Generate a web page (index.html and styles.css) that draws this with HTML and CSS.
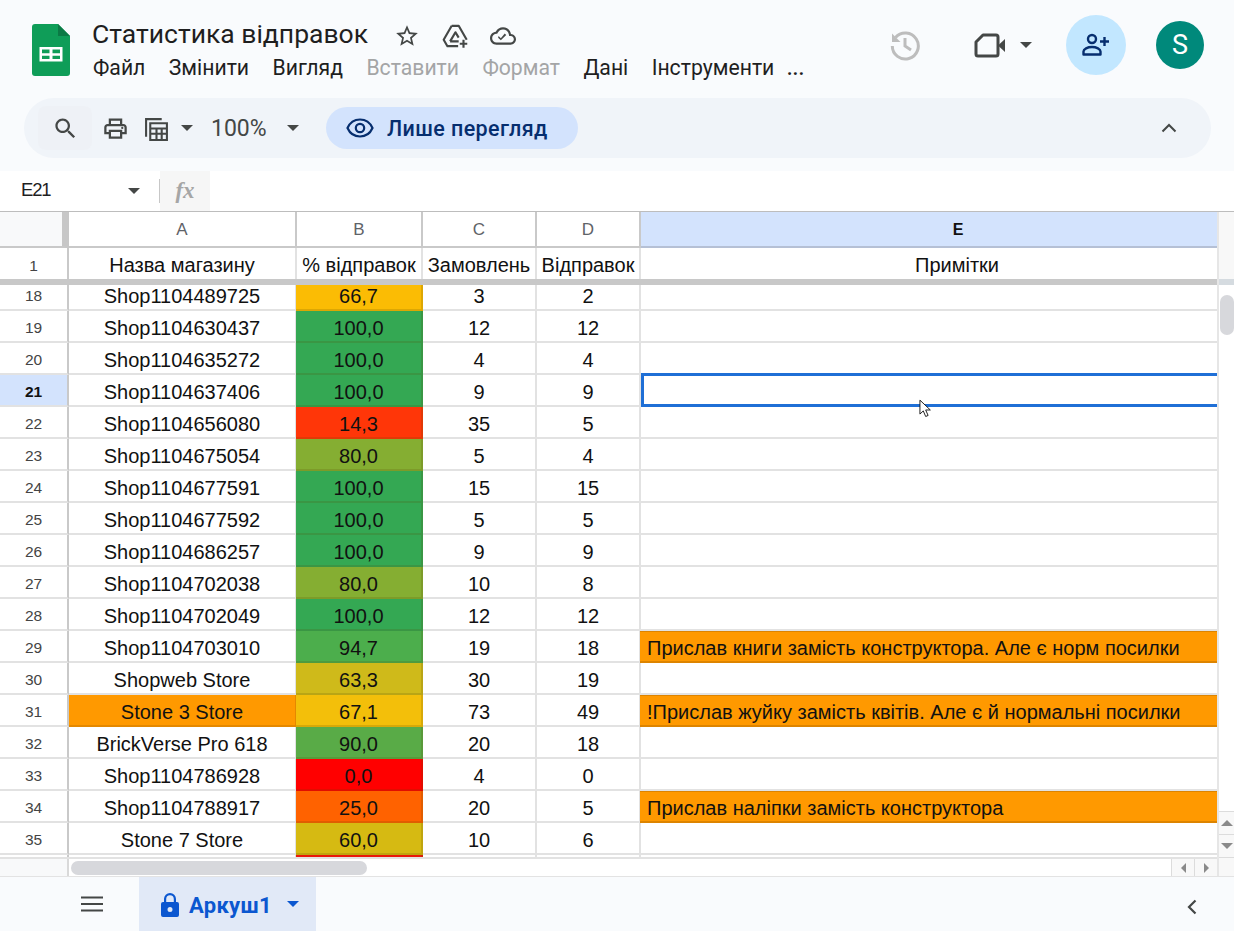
FILE: index.html
```html
<!DOCTYPE html>
<html lang="uk">
<head>
<meta charset="utf-8">
<title>Статистика відправок</title>
<link rel="stylesheet" href="styles.css">
</head>
<body>
<div class="app">
  <header class="top">
    <svg class="logo" viewBox="0 0 38 52"><path d="M3 0h23l12 12v37a3 3 0 0 1-3 3H3a3 3 0 0 1-3-3V3a3 3 0 0 1 3-3z" fill="#0f9d58"/><path d="M26 0l12 12H26z" fill="#0b7a45"/><path d="M7.500 23h23v14.500h-23zm2.500 2.500v3.700h7.500v-3.700zm10.500 0v3.700H28v-3.700zM10 31.800v3.200h7.500v-3.200zm10.500 0v3.200H28v-3.200z" fill="#fff" fill-rule="evenodd"/></svg>
    <div class="titles">
      <div class="title-row">
        <span class="doc-title">Статистика відправок</span>
        <svg class="ti ti-star" viewBox="0 0 24 24"><path d="M22 9.240l-7.190-.62L12 2 9.190 8.630 2 9.240l5.460 4.730L5.820 21 12 17.270 18.180 21l-1.630-7.030L22 9.240zM12 15.400l-3.760 2.270 1-4.280-3.320-2.880 4.380-.38L12 6.100l1.710 4.040 4.380.38-3.320 2.880 1 4.280L12 15.400z"/></svg>
        <svg class="ti ti-drive" viewBox="0 0 28 24"><path d="M10 2.500h6.500L24 15.500M10 2.500L2.500 15.500 6 21.500h10M8.500 17h8M8.500 17l5-8.500 3 5" fill="none" stroke="#444746" stroke-width="2" stroke-linejoin="round"/><path d="M21 15.500v7.500M17.500 19.250h7" stroke="#444746" stroke-width="2" fill="none"/></svg>
        <svg class="ti ti-cloud" viewBox="0 0 24 24"><path d="M19.350 10.040C18.670 6.590 15.640 4 12 4 9.110 4 6.600 5.640 5.350 8.040 2.340 8.360 0 10.910 0 14c0 3.310 2.690 6 6 6h13c2.760 0 5-2.240 5-5 0-2.640-2.050-4.780-4.650-4.960zM19 18H6c-2.210 0-4-1.790-4-4 0-2.050 1.530-3.760 3.560-3.970l1.070-.11.5-.95C8.080 7.140 9.940 6 12 6c2.620 0 4.880 1.860 5.390 4.430l.3 1.500 1.530.11c1.560.1 2.780 1.410 2.780 2.960 0 1.650-1.350 3-3 3zm-9-3.820l-2.090-2.090L7.500 13.500 10 16l5.010-5.010-1.410-1.410z"/></svg>
      </div>
      <nav class="menu">
        <span>Файл</span><span>Змінити</span><span>Вигляд</span><span class="off">Вставити</span><span class="off">Формат</span><span>Дані</span><span>Інструменти</span><span class="more">...</span>
      </nav>
    </div>
    <div class="actions">
      <svg class="history" viewBox="0 0 32 32"><path d="M6.500 8.500A13 13 0 1 1 3.300 17" fill="none" stroke="#bdbdbd" stroke-width="3"/><path d="M3 4.500l0 8.500h8.500z" fill="#bdbdbd"/><path d="M16 9v8l6 4" fill="none" stroke="#bdbdbd" stroke-width="3"/></svg>
      <svg class="video" viewBox="0 0 31 25"><path d="M9 2h13a2 2 0 0 1 2 2v17a2 2 0 0 1-2 2H4a2 2 0 0 1-2-2V9z" fill="none" stroke="#444746" stroke-width="3" stroke-linejoin="round"/><path d="M24 12.500l7-6.500v13z" fill="#444746"/></svg>
      <span class="caret caret-video"></span>
      <span class="share"><svg viewBox="0 0 28 24"><circle cx="10" cy="6" r="4" fill="none" stroke="#062e6f" stroke-width="2.400"/><path d="M1.500 21.500v-3c0-2.500 4-4.500 8.500-4.500s8.500 2 8.500 4.500v3z" fill="none" stroke="#062e6f" stroke-width="2.400" stroke-linejoin="round"/><path d="M22.500 4v9M18 8.500h9" stroke="#062e6f" stroke-width="2.400"/></svg></span>
      <span class="avatar">S</span>
    </div>
  </header>

  <div class="toolbar">
    <span class="search-wrap"><svg class="tool" viewBox="0 0 24 24"><path d="M15.500 14h-.79l-.28-.27C15.410 12.590 16 11.110 16 9.500 16 5.910 13.090 3 9.500 3S3 5.910 3 9.500 5.910 16 9.500 16c1.610 0 3.090-.59 4.230-1.570l.27.28v.79l5 4.990L20.490 19l-4.990-5zm-6 0C7.010 14 5 11.990 5 9.500S7.010 5 9.500 5 14 7.010 14 9.500 11.990 14 9.500 14z"/></svg></span>
    <svg class="tool print" viewBox="0 0 24 24"><path d="M19 8h-1V3H6v5H5c-1.660 0-3 1.340-3 3v6h4v4h12v-4h4v-6c0-1.660-1.340-3-3-3zM8 5h8v3H8V5zm8 12v2H8v-4h8v2zm2-2v-2H6v2H4v-4c0-.55.45-1 1-1h14c.55 0 1 .45 1 1v4h-2z"/><circle cx="18" cy="11.500" r="1"/></svg>
    <svg class="tool calc" viewBox="0 0 24 24"><path d="M1 2h16v2H3v16H1z"/><path d="M5 6h18v18H5zm2 2v3h14V8zm0 5v3h4v-3zm6 0v3h3v-3zm5 0v3h3v-3zm-11 5v4h4v-4zm6 0v4h3v-4zm5 0v4h3v-4z" fill-rule="evenodd"/></svg>
    <span class="caret caret-calc"></span>
    <span class="zoom">100%</span>
    <span class="caret caret-zoom"></span>
    <span class="mode">
      <svg viewBox="0 0 28 20"><path d="M14 1.500C8 1.500 3.500 5.500 1.500 10c2 4.500 6.500 8.500 12.500 8.500S24.500 14.500 26.500 10C24.500 5.500 20 1.500 14 1.500z" fill="none" stroke="#062e6f" stroke-width="2.200"/><circle cx="14" cy="10" r="4.200" fill="none" stroke="#062e6f" stroke-width="2.200"/></svg>
      Лише перегляд
    </span>
    <svg class="collapse" viewBox="0 0 16 10"><path d="M1.500 8.500L8 2l6.500 6.500" fill="none" stroke="#444746" stroke-width="2"/></svg>
  </div>

  <div class="formula">
    <span class="namebox">E21</span>
    <span class="caret caret-name"></span>
    <span class="sep"></span>
    <span class="fx">fx</span>
  </div>

  <main class="sheet">
    <div class="grid">
      <div class="frozen">
        <div class="row row-letters">
          <div class="c corner"></div>
          <div class="c">A</div><div class="c">B</div><div class="c">C</div><div class="c">D</div><div class="c active-col">E</div>
        </div>
        <div class="row row-head">
          <div class="c num">1</div>
          <div class="c">Назва магазину</div><div class="c">% відправок</div><div class="c">Замовлень</div><div class="c">Відправок</div><div class="c">Примітки</div>
        </div>
      </div>
      <div class="body">
        <div class="row first"><div class="c num">18</div><div class="c">Shop1104489725</div><div class="c heat" style="background-color:#fbbc04">66,7</div><div class="c">3</div><div class="c">2</div><div class="c note"></div></div>
        <div class="row"><div class="c num">19</div><div class="c">Shop1104630437</div><div class="c heat" style="background-color:#34a853">100,0</div><div class="c">12</div><div class="c">12</div><div class="c note"></div></div>
        <div class="row"><div class="c num">20</div><div class="c">Shop1104635272</div><div class="c heat" style="background-color:#34a853">100,0</div><div class="c">4</div><div class="c">4</div><div class="c note"></div></div>
        <div class="row"><div class="c num active-row">21</div><div class="c">Shop1104637406</div><div class="c heat" style="background-color:#34a853">100,0</div><div class="c">9</div><div class="c">9</div><div class="c note selected"></div></div>
        <div class="row"><div class="c num">22</div><div class="c">Shop1104656080</div><div class="c heat" style="background-color:#ff3608">14,3</div><div class="c">35</div><div class="c">5</div><div class="c note"></div></div>
        <div class="row"><div class="c num">23</div><div class="c">Shop1104675054</div><div class="c heat" style="background-color:#85ae32">80,0</div><div class="c">5</div><div class="c">4</div><div class="c note"></div></div>
        <div class="row"><div class="c num">24</div><div class="c">Shop1104677591</div><div class="c heat" style="background-color:#34a853">100,0</div><div class="c">15</div><div class="c">15</div><div class="c note"></div></div>
        <div class="row"><div class="c num">25</div><div class="c">Shop1104677592</div><div class="c heat" style="background-color:#34a853">100,0</div><div class="c">5</div><div class="c">5</div><div class="c note"></div></div>
        <div class="row"><div class="c num">26</div><div class="c">Shop1104686257</div><div class="c heat" style="background-color:#34a853">100,0</div><div class="c">9</div><div class="c">9</div><div class="c note"></div></div>
        <div class="row"><div class="c num">27</div><div class="c">Shop1104702038</div><div class="c heat" style="background-color:#85ae32">80,0</div><div class="c">10</div><div class="c">8</div><div class="c note"></div></div>
        <div class="row"><div class="c num">28</div><div class="c">Shop1104702049</div><div class="c heat" style="background-color:#34a853">100,0</div><div class="c">12</div><div class="c">12</div><div class="c note"></div></div>
        <div class="row"><div class="c num">29</div><div class="c">Shop1104703010</div><div class="c heat" style="background-color:#4cae4c">94,7</div><div class="c">19</div><div class="c">18</div><div class="c note flag">Прислав книги замість конструктора. Але є норм посилки</div></div>
        <div class="row"><div class="c num">30</div><div class="c">Shopweb Store</div><div class="c heat" style="background-color:#cfba1a">63,3</div><div class="c">30</div><div class="c">19</div><div class="c note"></div></div>
        <div class="row"><div class="c num">31</div><div class="c flag-name">Stone 3 Store</div><div class="c heat" style="background-color:#f3bf0a">67,1</div><div class="c">73</div><div class="c">49</div><div class="c note flag">!Прислав жуйку замість квітів. Але є й нормальні посилки</div></div>
        <div class="row"><div class="c num">32</div><div class="c">BrickVerse Pro 618</div><div class="c heat" style="background-color:#59ab47">90,0</div><div class="c">20</div><div class="c">18</div><div class="c note"></div></div>
        <div class="row"><div class="c num">33</div><div class="c">Shop1104786928</div><div class="c heat" style="background-color:#ff0000">0,0</div><div class="c">4</div><div class="c">0</div><div class="c note"></div></div>
        <div class="row"><div class="c num">34</div><div class="c">Shop1104788917</div><div class="c heat" style="background-color:#ff6200">25,0</div><div class="c">20</div><div class="c">5</div><div class="c note flag">Прислав наліпки замість конструктора</div></div>
        <div class="row"><div class="c num">35</div><div class="c">Stone 7 Store</div><div class="c heat" style="background-color:#d6ba12">60,0</div><div class="c">10</div><div class="c">6</div><div class="c note"></div></div>
        <div class="row"><div class="c num"></div><div class="c"></div><div class="c heat" style="background-color:#ea1a0a"></div><div class="c"></div><div class="c"></div><div class="c note"></div></div>
      </div>
      <div class="hscroll">
        <div class="hs-corner"></div>
        <div class="hs-track"><span class="hs-thumb"></span></div>
        <span class="arrow-btn"><i class="tri tri-left"></i></span>
        <span class="arrow-btn"><i class="tri tri-right"></i></span>
      </div>
      <svg class="cursor" viewBox="0 0 14 20"><path d="M1 1v15l3.600-3.400 2.600 6 2.600-1.100-2.600-5.900h5z" fill="#fff" stroke="#111" stroke-width="1"/></svg>
    </div>
    <aside class="vscroll">
      <div class="vs-head"></div>
      <div class="vs-track"><span class="vs-thumb"></span></div>
      <span class="vs-btn"><i class="tri tri-up"></i></span>
      <span class="vs-btn"><i class="tri tri-down"></i></span>
      <div class="vs-end"></div>
    </aside>
  </main>

  <footer class="tabs">
    <svg class="burger" viewBox="0 0 22 16"><path d="M0 1.500h22M0 8h22M0 14.500h22" stroke="#444746" stroke-width="2.200"/></svg>
    <div class="tab">
      <svg class="lock" viewBox="0 0 18 25"><path d="M9 1a6 6 0 0 0-6 6v3H2a2 2 0 0 0-2 2v11a2 2 0 0 0 2 2h14a2 2 0 0 0 2-2V12a2 2 0 0 0-2-2h-1V7a6 6 0 0 0-6-6zm0 2.200A3.800 3.800 0 0 1 12.800 7v3H5.200V7A3.800 3.800 0 0 1 9 3.200zM9 15a2.500 2.500 0 1 1 0 5 2.500 2.500 0 0 1 0-5z" fill="#0b57d0" fill-rule="evenodd"/></svg>
      <span class="tab-name">Аркуш1</span>
      <span class="caret caret-tab"></span>
    </div>
    <svg class="expand" viewBox="0 0 10 16"><path d="M8.500 1.500L2 8l6.500 6.500" fill="none" stroke="#444746" stroke-width="2.200"/></svg>
  </footer>
</div>
</body>
</html>
```
FILE: styles.css
```css
*, *::before, *::after { box-sizing: border-box; }
html, body { margin: 0; padding: 0; height: 100%; overflow: hidden; }
body { font-family: "Liberation Sans", Arial, sans-serif; color: #1f1f1f; background: #f9fbfd; }
.app { width: 1234px; height: 931px; display: flex; flex-direction: column; }

/* Top */
.top { height: 98px; display: flex; align-items: flex-start; padding-left: 32px; flex: none; }
.logo { width: 38px; height: 52px; margin-top: 24px; flex: none; }
.titles { margin-left: 22px; width: 767px; font-family: Roboto, sans-serif; }
.title-row { height: 44px; padding-top: 24px; display: flex; align-items: center; }
.doc-title { font-size: 26.500px; line-height: 36px; color: #1f1f1f; width: 276px; white-space: nowrap; }
.ti { fill: #444746; flex: none; margin-top: 4px; }
.ti-star { width: 26px; height: 26px; margin-left: 26px; }
.ti-drive { width: 30px; height: 26px; margin-left: 21px; }
.ti-cloud { width: 28px; height: 26px; margin-left: 18px; }
.menu { display: flex; gap: 23.400px; font-size: 21.200px; line-height: 28px; margin-top: 10px; margin-left: 1px; color: #1f1f1f; }
.menu span { white-space: nowrap; }
.menu .off { color: #a4a5a6; }
.menu .more { margin-left: -11px; font-weight: 500; }
.actions { margin-left: 15px; display: flex; align-items: center; height: 60px; margin-top: 15px; }
.history { width: 32px; height: 32px; margin-left: 15px; }
.video { width: 31px; height: 25px; margin-left: 53px; }
.caret { display: inline-block; width: 0; height: 0; border-left: 6.500px solid transparent; border-right: 6.500px solid transparent; border-top: 6.500px solid #444746; flex: none; }
.caret-video { margin-left: 15px; }
.share { width: 60px; height: 60px; border-radius: 50%; background: #c2e7ff; margin-left: 34px; display: flex; align-items: center; justify-content: center; }
.share svg { width: 28px; height: 24px; }
.avatar { width: 48px; height: 48px; border-radius: 50%; background: #00897b; color: #fff; margin-left: 30px; display: flex; align-items: center; justify-content: center; font: 27px Roboto, sans-serif; }

/* Toolbar */
.toolbar { height: 60px; margin: 0 23px 13px 24px; border-radius: 30px; background: #f0f4f9; display: flex; align-items: center; flex: none; }
.search-wrap { margin-left: 14px; width: 54px; height: 44px; background: #eef1f6; display: flex; align-items: center; justify-content: center; border-radius: 8px; }
.tool { width: 27px; height: 27px; fill: #444746; flex: none; }
.print { margin-left: 10px; }
.calc { width: 25px; height: 25px; margin-left: 15px; }
.caret-calc { margin-left: 12px; }
.zoom { margin-left: 18px; font: 23px Roboto, sans-serif; color: #444746; width: 56px; white-space: nowrap; }
.caret-zoom { margin-left: 20px; }
.mode { margin-left: 27px; height: 42px; width: 252px; border-radius: 21px; background: #d3e3fd; display: flex; align-items: center; font: 500 21.500px Roboto, sans-serif; color: #062e6f; padding-left: 20px; gap: 13px; letter-spacing: .4px; white-space: nowrap; }
.mode svg { width: 28px; height: 20px; flex: none; }
.collapse { width: 16px; height: 10px; margin-left: auto; margin-right: 34px; }

/* Formula */
.formula { height: 41px; background: #fff; display: flex; align-items: center; flex: none; border-bottom: 1px solid #bdbdbd; }
.namebox { margin-left: 21px; width: 107px; padding-bottom: 3px; font: 18.500px "Liberation Sans", sans-serif; letter-spacing: -1.200px; color: #1f1f1f; }
.caret-name { margin-top: 0; }
.sep { width: 1px; height: 24px; background: #c7c7c7; margin-left: 19px; }
.fx { width: 50px; height: 40px; background: #f6f6f6; text-align: center; font: italic 700 23px/39px "Liberation Serif", serif; color: #a6a6a6; }

/* Grid */
.sheet { flex: 1; display: flex; min-height: 0; background: #fff; position: relative; }
.grid { width: 1217px; flex: none; position: relative; display: flex; flex-direction: column; overflow: hidden; }
.row { display: grid; grid-template-columns: 69px 228px 126px 114px 104px 634px; height: 32px; }
.c { font-size: 20px; line-height: 32px; padding-top: 1px; text-align: center; color: #111; border-right: 2px solid #e2e2e2; border-bottom: 2px solid #e2e2e2; white-space: nowrap; overflow: hidden; background-clip: border-box; }
.frozen { flex: none; height: 73px; border-bottom: 6px solid #c8c8c8; overflow: hidden; }
.row-letters { height: 36px; }
.row-letters .c { font-size: 17px; line-height: 36px; padding-top: 0; color: #5f6368; border-color: #c9c9c9; }
.row-letters .corner { background: #f8f9fa; border-right: 7px solid #c7c7c7; }
.row-letters .active-col { background: #d3e3fd; color: #111; font-weight: 700; border-bottom-color: #b5c0d5; border-right: 0; font-size: 16px; }
.row-head { height: 31px; }
.row-head .c { line-height: 35px; padding-top: 0; border-bottom: 0; }
.num { font-size: 15.500px; color: #444; border-right-color: #c9c9c9; }
.row-head .num { border-right-color: #c9c9c9; font-size: 15.500px; }
.body { height: 572px; overflow: hidden; flex: none; }
.first { margin-top: -6px; }
.heat { border-color: rgba(90, 70, 0, .18); margin-left: -1px; }
.note { border-right: 0; }
.flag { background: #ff9900; text-align: left; padding-left: 7px; margin-left: -1px; border-color: rgba(120, 70, 0, .25); box-shadow: inset 0 1px 0 rgba(120, 70, 0, .25); }
.flag-name { background: #ff9900; border-color: rgba(120, 70, 0, .2); }
.active-row { background: #d3e3fd; color: #111; font-weight: 700; }
.selected { position: relative; overflow: visible; }
.selected::after { content: ""; position: absolute; left: 0; top: -2px; right: 0; height: 34px; border: 3px solid #1f6fd6; border-right: 0; }
.hscroll { flex: 1; display: flex; border-top: 2px solid #e2e2e2; background: #fff; }
.hs-corner { width: 69px; background: #f8f9fa; border-right: 2px solid #d9d9d9; flex: none; }
.hs-track { flex: 1; display: flex; align-items: center; padding-left: 2px; }
.hs-thumb { width: 296px; height: 14px; border-radius: 7px; background: #d7d8dc; }
.arrow-btn { width: 23px; background: #f8f8f8; border-left: 1px solid #dcdcdc; display: flex; align-items: center; justify-content: center; flex: none; }
.tri { display: block; width: 0; height: 0; border: 5px solid transparent; }
.tri-left { border-right-color: #8a8a8a; border-left-width: 0; }
.tri-right { border-left-color: #8a8a8a; border-right-width: 0; }
.tri-up { border-bottom-color: #8a8a8a; border-top-width: 0; border-left-width: 6px; border-right-width: 6px; border-bottom-width: 6px; }
.tri-down { border-top-color: #8a8a8a; border-bottom-width: 0; border-left-width: 6px; border-right-width: 6px; border-top-width: 6px; }
.cursor { position: absolute; left: 919px; top: 187px; width: 13px; height: 19px; }

.vscroll { width: 17px; flex: none; display: flex; flex-direction: column; border-left: 2px solid #e6e6e6; background: #fff; }
.vs-head { height: 73px; background: #f8f8f8; border-bottom: 6px solid #d5dbe0; flex: none; }
.vs-track { flex: 1; padding: 10px 0 0 1px; }
.vs-thumb { display: block; width: 14px; height: 40px; border-radius: 7px; background: #d7d8dc; }
.vs-btn { height: 23px; background: #f8f8f8; border-top: 1px solid #dcdcdc; display: flex; align-items: center; justify-content: center; flex: none; }
.vs-end { height: 19px; background: #f8f8f8; border-top: 1px solid #dcdcdc; flex: none; }

/* Tabs */
.tabs { height: 55px; flex: none; display: flex; align-items: center; background: #f9fbfd; border-top: 1px solid #e3e3e3; }
.burger { width: 22px; height: 16px; margin-left: 81px; }
.tab { width: 177px; height: 54px; margin-left: 36px; background: #e1e9f7; display: flex; align-items: center; padding-left: 22px; }
.lock { width: 18px; height: 25px; flex: none; }
.tab-name { margin-left: 10px; font: 700 22px Roboto, sans-serif; color: #0b57d0; width: 84px; white-space: nowrap; letter-spacing: .3px; padding-top: 2px; }
.caret-tab { margin-left: 14px; border-top-color: #0b57d0; }
.expand { width: 10px; height: 16px; margin-left: auto; margin-right: 37px; margin-top: 5px; }
```
